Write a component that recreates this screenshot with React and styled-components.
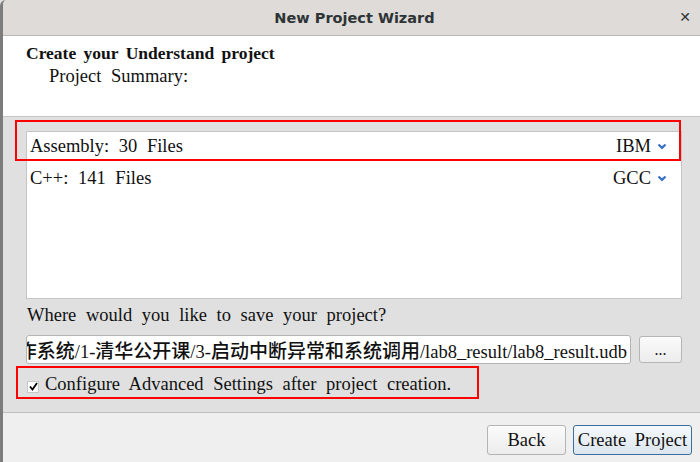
import React from 'react';
import styled, { createGlobalStyle } from 'styled-components';

const serif = `"Liberation Serif", "Times New Roman", serif`;

const GlobalStyle = createGlobalStyle`
  html, body {
    margin: 0;
    padding: 0;
    background: #e0e0e0;
  }
`;

const Window = styled.div`
  width: 700px;
  height: 462px;
  box-sizing: border-box;
  border-left: 3px solid #7c7c7c;
  border-top-left-radius: 6px;
  display: flex;
  flex-direction: column;
  overflow: hidden;
  font-family: ${serif};
  color: #111;
`;

const TitleBar = styled.div`
  height: 35px;
  flex-shrink: 0;
  background: #dedbd8;
  border-bottom: 1px solid #b8b5b2;
  display: flex;
  align-items: center;
  justify-content: center;
  padding-left: 6px;
  position: relative;
  font-family: "DejaVu Sans", sans-serif;
  font-weight: bold;
  font-size: 14.5px;
  color: #2e3436;
`;

const CloseButton = styled.span`
  position: absolute;
  right: 9px;
  top: 9px;
  font-size: 14px;
  color: #2e3436;
`;

const Header = styled.div`
  height: 81px;
  flex-shrink: 0;
  background: #fff;
  border-bottom: 1px solid #c6c6c6;
  box-sizing: border-box;
  padding: 6px 0 0 23px;
`;

const Heading = styled.div`
  font-weight: bold;
  font-size: 17.5px;
  word-spacing: 3px;
  line-height: 22px;
`;

const SubHeading = styled.div`
  font-size: 18.5px;
  word-spacing: 5px;
  line-height: 25px;
  padding-left: 23px;
`;

const Body = styled.div`
  flex: 1;
  background: #e0e0e0;
  padding: 14px 18px 0 23px;
  display: flex;
  flex-direction: column;
`;

const ListBox = styled.div`
  height: 168px;
  background: #fff;
  border: 1px solid #c4c4c4;
  box-sizing: border-box;
  display: flex;
  flex-direction: column;
`;

const Row = styled.div`
  height: ${p => p.$first ? 28 : 32}px;
  display: flex;
  align-items: center;
  justify-content: space-between;
  padding: ${p => p.$first ? '0' : '4px'} 14px 0 3px;
  box-sizing: border-box;
  font-size: 18.5px;
  word-spacing: 5px;
  position: relative;
  ${p => p.$highlight && `
    &::after {
      content: "";
      position: absolute;
      left: -12px;
      top: -12px;
      right: 0;
      bottom: -1px;
      border: 2px solid #ff0000;
      pointer-events: none;
    }
  `}
`;

const Compiler = styled.span`
  display: flex;
  align-items: center;
  gap: 6px;
`;

const Chevron = () => (
  <svg width="10" height="7" viewBox="0 0 10 7">
    <path d="M1.5 1.5 L5 4.8 L8.5 1.5" stroke="#3c70c8" strokeWidth="2.3" fill="none" />
  </svg>
);

const Question = styled.div`
  margin-top: 3px;
  font-size: 18.5px;
  word-spacing: 5px;
  line-height: 26px;
  padding-left: 1px;
`;

const PathRow = styled.div`
  display: flex;
  gap: 8px;
  margin-top: 7px;
  align-items: center;
`;

const PathField = styled.div`
  width: 605px;
  height: 29px;
  box-sizing: border-box;
  background: #fff;
  border: 1px solid #b4b4b4;
  border-radius: 3px;
  display: flex;
  justify-content: flex-end;
  align-items: center;
  overflow: hidden;
  white-space: nowrap;
  padding-right: 3px;
  font-size: 18.5px;
  font-family: "Liberation Serif", "Noto Sans CJK SC", serif;
`;

const Cjk = styled.span`
  font-family: "Noto Sans CJK SC", sans-serif;
  font-size: 19px;
  font-weight: 500;
`;

const BrowseButton = styled.button`
  width: 43px;
  height: 27px;
  box-sizing: border-box;
  border: 1px solid #b6b6b6;
  border-radius: 3px;
  background: linear-gradient(#fbfbfb, #ececec);
  font-family: ${serif};
  font-size: 16px;
  padding: 0;
  color: #111;
`;

const CheckRow = styled.label`
  display: flex;
  align-items: center;
  gap: 6px;
  margin-top: 9px;
  padding-left: 1px;
  font-size: 18.5px;
  line-height: 22px;
  word-spacing: 5px;
  width: fit-content;
  position: relative;
  &::after {
    content: "";
    position: absolute;
    left: -10px;
    top: -7px;
    right: -28px;
    bottom: -4px;
    border: 2px solid #ff0000;
  }
`;

const CheckBox = styled.span`
  width: 12px;
  height: 12px;
  margin-top: 5px;
  box-sizing: border-box;
  background: #fff;
  border: 1px solid #c8c8c8;
  display: flex;
  align-items: center;
  justify-content: center;
`;

const Footer = styled.div`
  height: 50px;
  flex-shrink: 0;
  background: #efefef;
  border-top: 1px solid #bdbdbd;
  box-sizing: border-box;
  display: flex;
  justify-content: flex-end;
  align-items: flex-start;
  gap: 7px;
  padding: 12px 8px 0 0;
`;

const Button = styled.button`
  height: 30px;
  width: ${p => p.$width}px;
  box-sizing: border-box;
  border: 1px solid ${p => p.$primary ? '#3a6f9c' : '#b4b4b4'};
  border-radius: 3px;
  background: ${p => p.$primary ? 'linear-gradient(#f6f9fc, #dce5ee)' : 'linear-gradient(#fbfbfb, #ececec)'};
  font-family: ${serif};
  font-size: 18.5px;
  word-spacing: 4px;
  color: #111;
  padding: 0;
`;

export default function App() {
  return (
    <>
      <GlobalStyle />
      <Window>
        <TitleBar>
          New Project Wizard
          <CloseButton>✕</CloseButton>
        </TitleBar>
        <Header>
          <Heading>Create your Understand project</Heading>
          <SubHeading>Project Summary:</SubHeading>
        </Header>
        <Body>
          <ListBox>
            <Row $first $highlight>
              <span>Assembly: 30 Files</span>
              <Compiler>IBM <Chevron /></Compiler>
            </Row>
            <Row>
              <span>C++: 141 Files</span>
              <Compiler>GCC <Chevron /></Compiler>
            </Row>
          </ListBox>
          <Question>Where would you like to save your project?</Question>
          <PathRow>
            <PathField>
              <span>
                <Cjk>作系统</Cjk>/1-<Cjk>清华公开课</Cjk>/3-<Cjk>启动中断异常和系统调用</Cjk>/lab8_result/lab8_result.udb
              </span>
            </PathField>
            <BrowseButton>...</BrowseButton>
          </PathRow>
          <CheckRow>
            <CheckBox>
              <svg width="9" height="9" viewBox="0 0 9 9">
                <path d="M1 4.5 L3.5 7.5 L8 1" stroke="#000" strokeWidth="1.8" fill="none" />
              </svg>
            </CheckBox>
            Configure Advanced Settings after project creation.
          </CheckRow>
        </Body>
        <Footer>
          <Button $width={79}>Back</Button>
          <Button $width={119} $primary>Create Project</Button>
        </Footer>
      </Window>
    </>
  );
}
